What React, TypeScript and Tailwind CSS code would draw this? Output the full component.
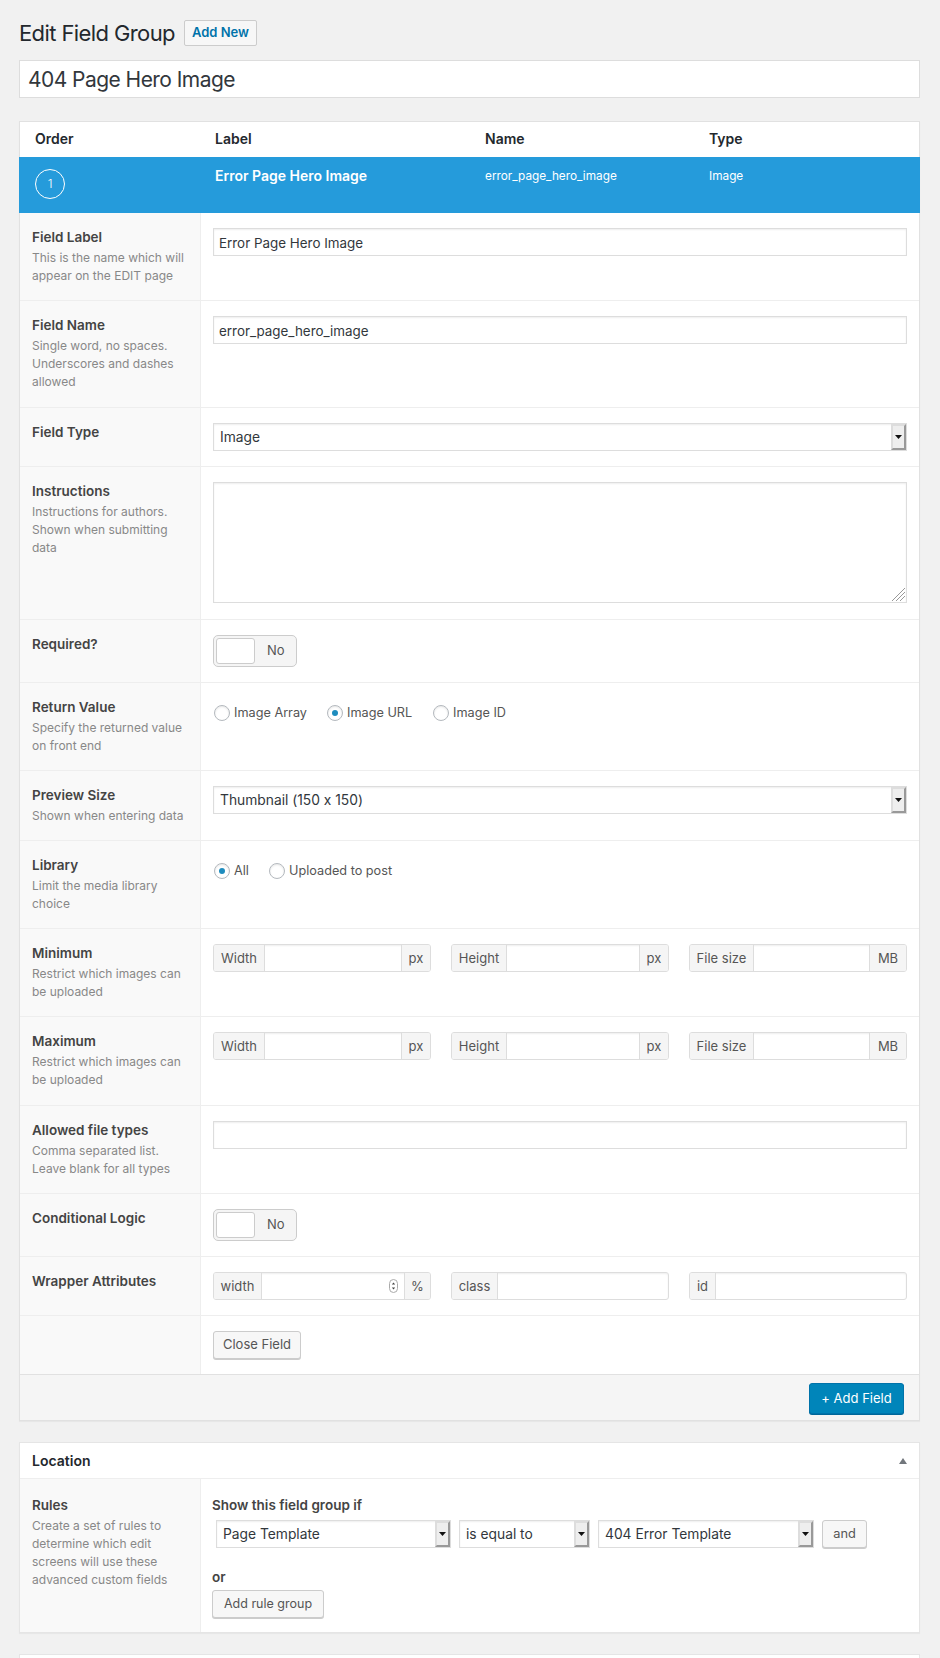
const font = "font-['Inter','Liberation_Sans',sans-serif] [font-feature-settings:'calt'_0]"

function Select({ value, className }: { value: string; className: string }) {
  return (
    <div className={`flex h-[28px] items-stretch border border-[#ddd] bg-white shadow-[inset_0_1px_2px_rgba(0,0,0,0.07)] ${className}`}>
      <span className="flex-1 truncate pl-[6px] text-[13.8px] leading-[27px] text-[#32373c]">{value}</span>
      <span className="flex w-[15px] items-center justify-center border-t-2 border-r-2 border-b-2 border-l-2 border-t-[#ddd] border-r-[#999] border-b-[#999] border-l-[#ddd] bg-[#eeeeee]">
        <svg width="7" height="4" viewBox="0 0 7 4"><path d="M0 0h7L3.5 4z" fill="#111" /></svg>
      </span>
    </div>
  )
}

function TextInput({ value }: { value?: string }) {
  return (
    <input
      readOnly
      value={value ?? ""}
      className="h-[28px] w-full border border-[#ddd] bg-white px-[5px] pt-[1px] text-[13.4px] text-[#32373c] shadow-[inset_0_1px_2px_rgba(0,0,0,0.07)] outline-none"
    />
  )
}

function Toggle() {
  return (
    <div className="flex h-[32px] w-[84px] items-center rounded-[5px] border border-[#ccc] bg-[#f5f5f5] pl-[2px]">
      <span className="h-[26px] w-[39px] rounded-[3px] border border-[#ccc] bg-white" />
      <span className="ml-[12px] text-[13px] text-[#555]">No</span>
    </div>
  )
}

function Radio({ label, checked, className }: { label: string; checked?: boolean; className?: string }) {
  return (
    <label className={`flex items-center text-[12.7px] text-[#555] ${className ?? ""}`}>
      <span className="mr-[4px] flex h-[16px] w-[16px] items-center justify-center rounded-full border border-[#b4b9be] bg-white shadow-[inset_0_1px_2px_rgba(0,0,0,0.1)]">
        {checked && <span className="h-[6px] w-[6px] rounded-full bg-[#1e8cbe]" />}
      </span>
      {label}
    </label>
  )
}

function Addon({ children, className }: { children: string; className: string }) {
  return (
    <span className={`flex shrink-0 items-center justify-center bg-[#f5f5f5] pt-[1px] text-[13px] text-[#555] ${className}`}>
      {children}
    </span>
  )
}

function InputGroup({
  prepend,
  prependWidth,
  append,
  appendWidth,
  spinner,
}: {
  prepend: string
  prependWidth: string
  append?: string
  appendWidth?: string
  spinner?: boolean
}) {
  return (
    <div className="relative flex h-[28px] overflow-hidden rounded-[3px] border border-[#ddd] bg-white shadow-[inset_0_1px_2px_rgba(0,0,0,0.07)]">
      <Addon className={`border-r border-[#ddd] ${prependWidth}`}>{prepend}</Addon>
      <span className="flex-1" />
      {spinner && (
        <svg className="mr-[6px] self-center" width="9" height="14" viewBox="0 0 9 14">
          <rect x="0.5" y="0.5" width="8" height="13" rx="4" fill="#fff" stroke="#aaa" />
          <path d="M2.8 5.6 4.5 3.4l1.7 2.2zM2.8 8.4 4.5 10.6l1.7-2.2z" fill="#444" />
        </svg>
      )}
      {append && <Addon className={`border-l border-[#ddd] ${appendWidth}`}>{append}</Addon>}
    </div>
  )
}

function SizeGroups() {
  return (
    <div className="grid grid-cols-3 gap-[20px]">
      <InputGroup prepend="Width" prependWidth="w-[51px]" append="px" appendWidth="w-[29px]" />
      <InputGroup prepend="Height" prependWidth="w-[55px]" append="px" appendWidth="w-[29px]" />
      <InputGroup prepend="File size" prependWidth="w-[64px]" append="MB" appendWidth="w-[37px]" />
    </div>
  )
}

function Row({
  title,
  desc,
  height,
  first,
  children,
}: {
  title?: string
  desc?: string[]
  height: string
  first?: boolean
  children: React.ReactNode
}) {
  return (
    <div className={`flex ${height} ${first ? "" : "border-t border-[#eee]"}`}>
      <div className="w-[181px] shrink-0 border-r border-[#eee] bg-[#f9f9f9] pt-[15px] pl-[12px]">
        {title && <div className="text-[13.5px] leading-[18px] font-semibold text-[#444]">{title}</div>}
        {desc && (
          <div className="mt-[3px] text-[12px] leading-[18px] text-[#888]">
            {desc.map((line) => (
              <div key={line}>{line}</div>
            ))}
          </div>
        )}
      </div>
      <div className="flex-1 pt-[15px] pr-[12px] pl-[12px]">{children}</div>
    </div>
  )
}

function GrayButton({ children, className }: { children: string; className: string }) {
  return (
    <button className={`h-[28px] rounded-[3px] border border-[#ccc] bg-[#f7f7f7] text-[#555] shadow-[0_1px_0_#ccc] ${className}`}>
      {children}
    </button>
  )
}

export default function App() {
  return (
    <div className={`h-[1658px] overflow-hidden bg-[#f1f1f1] pt-[20px] pr-[20px] pl-[19px] ${font}`}>
      <div className="flex h-[26px] items-center">
        <h1 className="text-[22px] font-normal tracking-[-0.6px] text-[#23282d]">Edit Field Group</h1>
        <button className="ml-[9px] h-[26px] w-[73px] rounded-[2px] border border-[#ccc] bg-[#f7f7f7] text-[13px] font-semibold text-[#0073aa]">
          Add New
        </button>
      </div>

      <input
        readOnly
        value="404 Page Hero Image"
        className="mt-[14px] h-[38px] w-full border border-[#ddd] bg-white px-[8px] text-[21px] tracking-[-0.55px] text-[#32373c] outline-none"
      />

      <div className="mt-[23px] border border-[#e1e1e1] bg-white shadow-[0_1px_1px_rgba(0,0,0,0.04)]">
        <div className="flex h-[35px] items-center pb-[3px] text-[14px] font-semibold text-[#23282d]">
          <span className="w-[195px] pl-[15px]">Order</span>
          <span className="w-[270px]">Label</span>
          <span className="w-[224px]">Name</span>
          <span>Type</span>
        </div>

        <div className="-mx-px flex h-[56px] bg-[#259bdb] text-white">
          <div className="w-[196px] pt-[12px] pl-[16px]">
            <span className="flex h-[30px] w-[30px] items-center justify-center rounded-full border border-white text-[12px] font-light">
              1
            </span>
          </div>
          <div className="w-[270px] pt-[9px] text-[14px] leading-[20px] font-semibold">Error Page Hero Image</div>
          <div className="w-[224px] pt-[9px] text-[11.8px] leading-[20px]">error_page_hero_image</div>
          <div className="pt-[9px] text-[11.8px] leading-[20px]">Image</div>
        </div>

        <Row first height="h-[87px]" title="Field Label" desc={["This is the name which will", "appear on the EDIT page"]}>
          <TextInput value="Error Page Hero Image" />
        </Row>
        <Row height="h-[107px]" title="Field Name" desc={["Single word, no spaces.", "Underscores and dashes", "allowed"]}>
          <TextInput value="error_page_hero_image" />
        </Row>
        <Row height="h-[59px]" title="Field Type">
          <Select value="Image" className="w-full" />
        </Row>
        <Row height="h-[153px]" title="Instructions" desc={["Instructions for authors.", "Shown when submitting", "data"]}>
          <div className="relative">
            <textarea readOnly className="block h-[121px] w-full resize-none border border-[#ddd] bg-white shadow-[inset_0_1px_2px_rgba(0,0,0,0.07)] outline-none" />
            <svg className="absolute right-[2px] bottom-[2px]" width="13" height="13" viewBox="0 0 13 13">
              <path d="M0 13 13 0M4 13l9-9M8 13l5-5" stroke="#999" strokeWidth="1" fill="none" />
            </svg>
          </div>
        </Row>
        <Row height="h-[63px]" title="Required?">
          <Toggle />
        </Row>
        <Row height="h-[88px]" title="Return Value" desc={["Specify the returned value", "on front end"]}>
          <div className="mt-[5px] ml-px flex">
            <Radio label="Image Array" className="w-[113px]" />
            <Radio label="Image URL" checked className="w-[106px]" />
            <Radio label="Image ID" />
          </div>
        </Row>
        <Row height="h-[70px]" title="Preview Size" desc={["Shown when entering data"]}>
          <Select value="Thumbnail (150 x 150)" className="w-full" />
        </Row>
        <Row height="h-[88px]" title="Library" desc={["Limit the media library", "choice"]}>
          <div className="mt-[5px] ml-px flex">
            <Radio label="All" checked className="w-[55px]" />
            <Radio label="Uploaded to post" />
          </div>
        </Row>
        <Row height="h-[88px]" title="Minimum" desc={["Restrict which images can", "be uploaded"]}>
          <SizeGroups />
        </Row>
        <Row height="h-[89px]" title="Maximum" desc={["Restrict which images can", "be uploaded"]}>
          <SizeGroups />
        </Row>
        <Row height="h-[88px]" title="Allowed file types" desc={["Comma separated list.", "Leave blank for all types"]}>
          <TextInput />
        </Row>
        <Row height="h-[63px]" title="Conditional Logic">
          <Toggle />
        </Row>
        <Row height="h-[59px]" title="Wrapper Attributes">
          <div className="grid grid-cols-3 gap-[20px]">
            <InputGroup prepend="width" prependWidth="w-[48px]" append="%" appendWidth="w-[26px]" spinner />
            <InputGroup prepend="class" prependWidth="w-[46px]" />
            <InputGroup prepend="id" prependWidth="w-[26px]" />
          </div>
        </Row>
        <Row height="h-[59px]">
          <GrayButton className="w-[88px] text-[13px]">Close Field</GrayButton>
        </Row>

        <div className="flex h-[46px] items-start justify-end border-t border-[#e1e1e1] bg-[#f5f5f5] pt-[8px] pr-[15px]">
          <button className="h-[31px] w-[95px] rounded-[3px] border border-[#0073aa] bg-[#0085ba] text-[13px] text-white shadow-[0_1px_0_#006799]">
            + Add Field
          </button>
        </div>
      </div>

      <div className="mt-[21px] border border-[#e5e5e5] bg-white shadow-[0_1px_1px_rgba(0,0,0,0.04)]">
        <div className="flex h-[35px] items-center justify-between pr-[12px] pl-[12px]">
          <span className="text-[14px] font-semibold text-[#23282d]">Location</span>
          <svg width="8" height="6" viewBox="0 0 8 6"><path d="M0 6 4 0l4 6z" fill="#72777c" /></svg>
        </div>
        <div className="flex h-[154px] border-t border-[#eee]">
          <div className="w-[181px] shrink-0 border-r border-[#eee] bg-[#f9f9f9] pt-[17px] pl-[12px]">
            <div className="text-[13.5px] leading-[18px] font-semibold text-[#444]">Rules</div>
            <div className="mt-[3px] text-[12px] leading-[18px] text-[#888]">
              <div>Create a set of rules to</div>
              <div>determine which edit</div>
              <div>screens will use these</div>
              <div>advanced custom fields</div>
            </div>
          </div>
          <div className="flex-1 pt-[17px] pl-[11px]">
            <div className="text-[13.5px] leading-[18px] font-semibold text-[#444]">Show this field group if</div>
            <div className="mt-[6px] ml-[4px] flex items-center gap-[8px]">
              <Select value="Page Template" className="w-[235px]" />
              <Select value="is equal to" className="w-[131px]" />
              <Select value="404 Error Template" className="w-[216px]" />
              <GrayButton className="w-[45px] text-[12.8px]">and</GrayButton>
            </div>
            <div className="mt-[20px] text-[13.5px] leading-[18px] font-semibold text-[#444]">or</div>
            <GrayButton className="mt-[4px] w-[112px] text-[12.5px]">Add rule group</GrayButton>
          </div>
        </div>
      </div>

      <div className="mt-[21px] h-[40px] border border-[#e5e5e5] bg-white" />
    </div>
  )
}
